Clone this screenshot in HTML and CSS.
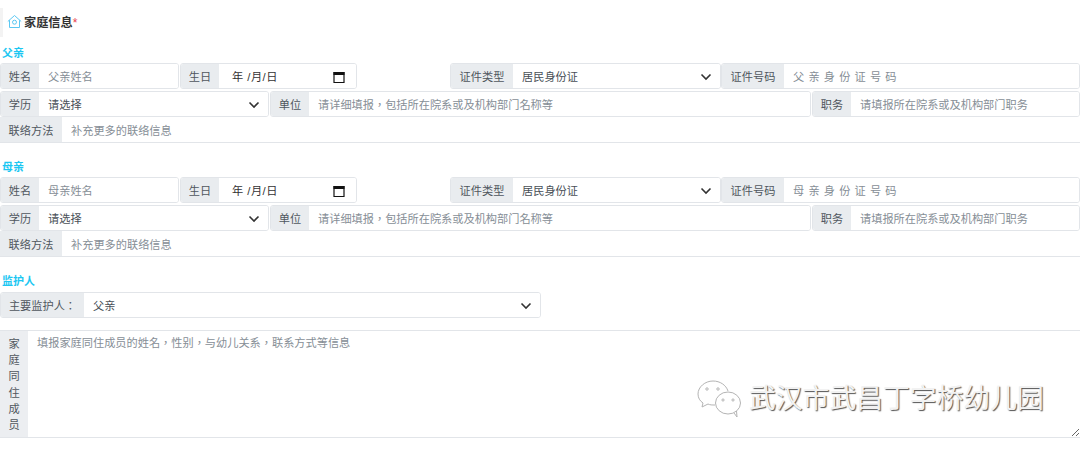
FILE: index.html
```html
<!DOCTYPE html>
<html lang="zh-CN">
<head>
<meta charset="utf-8">
<title>家庭信息</title>
<link rel="stylesheet" href="styles.css">
</head>
<body>
<header class="title">
  <svg class="home" width="15" height="15" viewBox="0 0 15 15" fill="none" stroke="#5cc8f2" stroke-width="1"><path d="M.8 7.500 7.500 1.500 14.200 7.500M2.500 6.200v7.300h10V6.200"/><circle cx="7.500" cy="8.200" r="2"/></svg>
  <strong>家庭信息</strong><span class="req">*</span>
</header>

<section class="person">
  <h3>父亲</h3>
  <div class="row first">
    <div class="group s2 short"><span class="lab w39">姓名</span><input class="field" placeholder="父亲姓名"></div>
    <div class="group s2 short"><span class="lab w39">生日</span><div class="field date"><span>年 /月/日</span><svg width="12" height="12" viewBox="0 0 12 12"><path d="M1 1.500h10v10H1z" fill="none" stroke="#111" stroke-width="1.200"/><path d="M.5 1h11v3H.5z" fill="#111"/></svg></div></div>
    <div class="group s3 o1"><span class="lab w63">证件类型</span><div class="field sel"><span>居民身份证</span><svg class="chev" width="12" height="8" viewBox="0 0 12 8"><path d="M1.500 1.500 6 6l4.500-4.500" fill="none" stroke="#333" stroke-width="1.600"/></svg></div></div>
    <div class="group s4"><span class="lab w63">证件号码</span><input class="field wide" placeholder="父亲身份证号码"></div>
  </div>
  <div class="row">
    <div class="group s3 narrow"><span class="lab w39">学历</span><div class="field sel"><span>请选择</span><svg class="chev" width="12" height="8" viewBox="0 0 12 8"><path d="M1.500 1.500 6 6l4.500-4.500" fill="none" stroke="#333" stroke-width="1.600"/></svg></div></div>
    <div class="group s6"><span class="lab w39">单位</span><input class="field tc" lang="zh-TW" placeholder="请详细填报，包括所在院系或及机构部门名称等"></div>
    <div class="group s3 last"><span class="lab w39">职务</span><input class="field" placeholder="请填报所在院系或及机构部门职务"></div>
  </div>
  <div class="line"><span class="lab w62">联络方法</span><input class="field" placeholder="补充更多的联络信息"></div>
</section>

<section class="person">
  <h3>母亲</h3>
  <div class="row first">
    <div class="group s2 short"><span class="lab w39">姓名</span><input class="field" placeholder="母亲姓名"></div>
    <div class="group s2 short"><span class="lab w39">生日</span><div class="field date"><span>年 /月/日</span><svg width="12" height="12" viewBox="0 0 12 12"><path d="M1 1.500h10v10H1z" fill="none" stroke="#111" stroke-width="1.200"/><path d="M.5 1h11v3H.5z" fill="#111"/></svg></div></div>
    <div class="group s3 o1"><span class="lab w63">证件类型</span><div class="field sel"><span>居民身份证</span><svg class="chev" width="12" height="8" viewBox="0 0 12 8"><path d="M1.500 1.500 6 6l4.500-4.500" fill="none" stroke="#333" stroke-width="1.600"/></svg></div></div>
    <div class="group s4"><span class="lab w63">证件号码</span><input class="field wide" placeholder="母亲身份证号码"></div>
  </div>
  <div class="row">
    <div class="group s3 narrow"><span class="lab w39">学历</span><div class="field sel"><span>请选择</span><svg class="chev" width="12" height="8" viewBox="0 0 12 8"><path d="M1.500 1.500 6 6l4.500-4.500" fill="none" stroke="#333" stroke-width="1.600"/></svg></div></div>
    <div class="group s6"><span class="lab w39">单位</span><input class="field tc" lang="zh-TW" placeholder="请详细填报，包括所在院系或及机构部门名称等"></div>
    <div class="group s3 last"><span class="lab w39">职务</span><input class="field" placeholder="请填报所在院系或及机构部门职务"></div>
  </div>
  <div class="line"><span class="lab w62">联络方法</span><input class="field" placeholder="补充更多的联络信息"></div>
</section>

<section class="guardian">
  <h3>监护人</h3>
  <div class="row">
    <div class="group s6"><span class="lab w84 tc" lang="zh-TW">主要监护人：</span><div class="field sel"><span>父亲</span><svg class="chev" width="12" height="8" viewBox="0 0 12 8"><path d="M1.500 1.500 6 6l4.500-4.500" fill="none" stroke="#333" stroke-width="1.600"/></svg></div></div>
  </div>
</section>

<div class="members">
  <span class="lab vert">家庭同住成员</span>
  <textarea class="area tc" lang="zh-TW" placeholder="填报家庭同住成员的姓名，性别，与幼儿关系，联系方式等信息"></textarea>
</div>

<div class="mark">
  <svg width="46" height="38" viewBox="0 0 46 38" fill="none" stroke="#b4b4b4" stroke-width="1"><path d="M16 1C8 1 1 7 1 14c0 4 2 7 5 9l-1 4 6-3c2 1 4 1 7 1"/><path d="M16 1c7 0 13 4 15 10"/><circle cx="10" cy="9" r="1.200"/><circle cx="21" cy="9" r="1.200"/><ellipse cx="31" cy="23" rx="12.500" ry="11"/><path d="M37 33l3 4-.5-6"/><circle cx="26" cy="20" r="1.100"/><circle cx="36" cy="20" r="1.100"/></svg>
  <span>武汉市武昌丁字桥幼儿园</span>
</div>
</body>
</html>
```
FILE: styles.css
```css
* { box-sizing: border-box; }
html, body { margin: 0; padding: 0; }
body {
  width: 1080px;
  height: 449px;
  overflow: hidden;
  position: relative;
  background: #fff;
  color: #495057;
  font: 11.200px/1.5 "Liberation Sans", "Noto Sans CJK SC", sans-serif;
}
.tc { font-family: "Liberation Sans", "Noto Sans CJK TC", sans-serif; }
.title {
  display: flex;
  align-items: center;
  height: 29px;
  margin-top: 8px;
  padding: 1px 0 0 4px;
  border-left: 3px solid #f3f3f3;
  color: #333;
}
.title strong { font-size: 12.200px; margin-left: 1px; }
.home { margin-right: 1px; margin-top: -3px; }
.req { color: #e8414f; font-size: 12px; }
h3 {
  margin: 0;
  height: 17px;
  padding-left: 2px;
  font-size: 11px;
  line-height: 15px;
  font-weight: 700;
  color: #1cc7f2;
}
.person { padding-top: 9px; height: 114px; }
.person:first-of-type { height: 108px; }
.person + .person { padding-top: 15px; }
.guardian { margin-top: 15px; }
.guardian h3 { height: 18px; }
.row {
  display: grid;
  grid-template-columns: repeat(12, 90px);
  height: 26px;
}
.first { margin-bottom: 2px; }
.group {
  display: flex;
  height: 26px;
  margin-right: -1px;
  border: 1px solid #e2e5e9;
  border-radius: 3px;
  overflow: hidden;
}
.s2 { grid-column: span 2; }
.s3 { grid-column: span 3; }
.s4 { grid-column: span 4; margin-right: 0; margin-left: 1px; }
.s6 { grid-column: span 6; }
.o1 { grid-column: 6 / span 3; }
.short { margin-right: 1px; }
.short + .short { margin-right: 3px; }
.narrow { margin-right: 1px; }
.last { margin-left: 2px; margin-right: 0; }
.lab {
  flex: none;
  display: flex;
  align-items: center;
  justify-content: center;
  background: #e9ecef;
  color: #50575e;
  white-space: nowrap;
}
.w39 { width: 38px; }
.w62 { width: 62px; }
.w63 { width: 62px; }
.w84 { width: 83px; }
.field {
  flex: 1;
  min-width: 0;
  display: flex;
  align-items: center;
  justify-content: space-between;
  padding: 0 9px;
  border: 0;
  outline: 0;
  background: #fff;
  color: #495057;
  font: inherit;
}
.field.tc, .area.tc { font-family: "Liberation Sans", "Noto Sans CJK TC", sans-serif; }
.field::placeholder, .area::placeholder { color: #868e96; opacity: 1; }
.wide { letter-spacing: 4.200px; }
.date { padding: 0 11px 0 13px; }
.date svg { flex: none; }
.date span { color: #333; letter-spacing: .5px; }
.sel { padding-right: 8px; }
.chev { flex: none; }
.group .lab, .group .field { padding-top: 2px; }
.line .lab, .line .field { padding-top: 4px; }
.line {
  display: flex;
  height: 26px;
  border-bottom: 1px solid #e2e5e9;
}
.members {
  display: flex;
  height: 108px;
  margin-top: 12px;
  border-top: 1px solid #e2e5e9;
  border-bottom: 1px solid #e2e5e9;
}
.vert {
  width: 28px;
  white-space: normal;
  padding: 5px 8px 0;
  line-height: 16.200px;
  text-align: center;
  align-items: flex-start;
  background: #eceef1;
}
.area {
  flex: 1;
  padding: 4px 9px;
  border: 0;
  outline: 0;
  font: inherit;
  color: #495057;
  background: #fff;
}
.mark {
  position: absolute;
  left: 697px;
  top: 380px;
  display: flex;
  align-items: center;
  gap: 6px;
}
.mark svg { flex: none; }
.mark span {
  font-size: 26.800px;
  line-height: 34px;
  color: #f2f2f2;
  text-shadow: 1px 1px 1px #555;
  white-space: nowrap;
}
```
